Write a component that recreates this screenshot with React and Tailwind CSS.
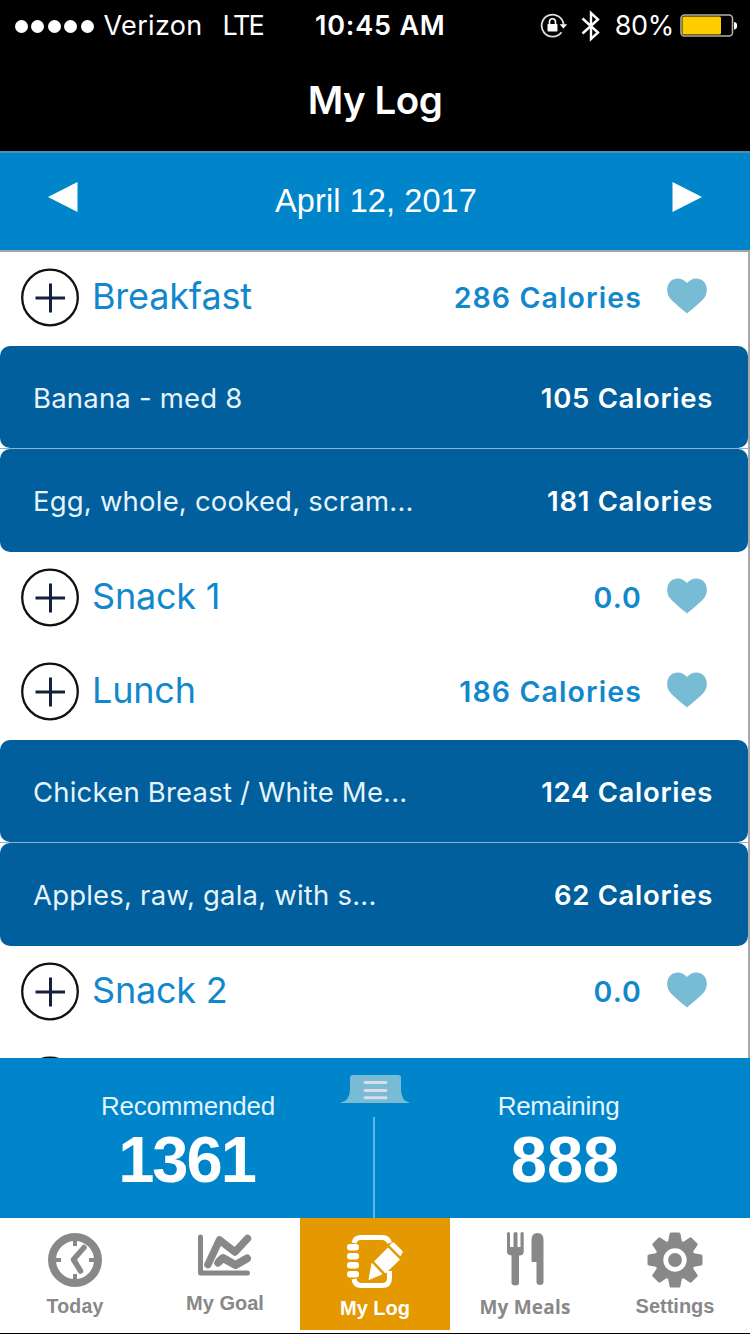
import { useState } from 'react';

const meals = [
  {
    name: 'Breakfast',
    total: '286 Calories',
    items: [
      { name: 'Banana - med 8', calories: '105 Calories' },
      { name: 'Egg, whole, cooked, scram...', calories: '181 Calories' },
    ],
  },
  { name: 'Snack 1', total: '0.0', items: [] },
  {
    name: 'Lunch',
    total: '186 Calories',
    items: [
      { name: 'Chicken Breast / White Me...', calories: '124 Calories' },
      { name: 'Apples, raw, gala, with s...', calories: '62 Calories' },
    ],
  },
  { name: 'Snack 2', total: '0.0', items: [] },
];

const RotationLockIcon = () => (
  <svg width="28" height="26" viewBox="0 0 28 26" fill="none">
    <path d="M21.5 19.2A11 11 0 1 1 23.6 11.5" stroke="#ddd" strokeWidth="1.8" />
    <path d="M19.6 11.2h7.6l-3.8 4.4z" fill="#fff" />
    <rect x="7.5" y="11" width="10" height="7.5" rx="0.8" fill="#fff" />
    <path d="M9.5 11V8.8a3 3 0 0 1 6 0V11" stroke="#fff" strokeWidth="1.6" />
  </svg>
);

const BluetoothIcon = () => (
  <svg width="20" height="32" viewBox="0 0 20 32" fill="none" stroke="#fff" strokeWidth="2.4">
    <path d="M1.5 8.5L17 22.5L10 29V3L17 9.5L1.5 23.5" />
  </svg>
);

const BatteryIcon = () => (
  <svg width="58" height="24" viewBox="0 0 58 24">
    <rect x="1" y="1" width="51.5" height="21" rx="3.5" fill="none" stroke="#b5b0a0" strokeWidth="1.6" />
    <rect x="2.4" y="2.6" width="38.6" height="17.8" rx="1.5" fill="#ffcc00" />
    <path d="M54 8c2 0 3.2 1.4 3.2 3.8S56 15.6 54 15.6z" fill="#fff" />
  </svg>
);

const StatusBar = () => (
  <div className="h-[52px] flex items-center text-white text-[27px] pl-[15px] pr-[12px]">
    <div className="w-[300px] flex items-center">
      <div className="flex gap-[3.4px] mr-[10px]">
        {[1, 2, 3, 4, 5].map((dot) => (
          <span key={dot} className="size-[13px] rounded-full bg-white" />
        ))}
      </div>
      <span className="tracking-[0.3px]">Verizon</span>
      <span className="ml-[20px] tracking-[-2px]">LTE</span>
    </div>
    <span className="font-semibold tracking-[0.8px]">10:45 AM</span>
    <div className="ml-auto flex items-center">
      <RotationLockIcon />
      <div className="ml-[13px] mr-[14px]"><BluetoothIcon /></div>
      <span className="tracking-[-0.3px]">80%</span>
      <div className="ml-[6px]"><BatteryIcon /></div>
    </div>
  </div>
);

const HeartIcon = () => (
  <svg width="41" height="36" viewBox="0 0 41 36" fill="#77bbd5">
    <path d="M20 35.5C17.5 33 6 24.5 2.500 19.5C-1 14.5-.5 7 3.500 3.200C8.500-1.300 16 -.2 20 5C24-.2 31.500-1.300 36.500 3.200C40.500 7 41 14.5 37.500 19.5C34 24.500 22.500 33 20 35.500Z" />
  </svg>
);

const AddButton = () => (
  <button>
    <svg width="58" height="59" viewBox="0 0 58 59" fill="none">
      <circle cx="29" cy="29.5" r="27.8" stroke="#111" strokeWidth="2.3" />
      <path d="M14.5 30H44M29.5 15.5V44.5" stroke="#14213a" strokeWidth="3" />
    </svg>
  </button>
);

const MealHeader = ({ meal }) => (
  <div className="h-[94px] pt-[16px] pl-[21px] pr-[40px] flex items-start">
    <AddButton />
    <span className="ml-[13px] text-[36px] leading-[56px] text-[#1288cc] tracking-[-0.2px]">{meal.name}</span>
    <span className="ml-auto mt-[2px] text-[28.5px] leading-[56px] font-semibold text-[#1288cc] tracking-[1.1px]">{meal.total}</span>
    <div className="ml-[25px] mt-[10px]"><HeartIcon /></div>
  </div>
);

const MealItem = ({ item }) => (
  <div className="h-[102px] last:h-[103px] rounded-[10px] bg-[#005f9c] text-white pl-[33px] pr-[35px] pt-[4px] last:pt-[2px] flex items-center justify-between">
    <span className="text-[27.5px] tracking-[0.2px] text-[#e6f3fb]">{item.name}</span>
    <span className="text-[27.5px] font-semibold tracking-[0.7px]">{item.calories}</span>
  </div>
);

const TodayIcon = () => (
  <svg width="54" height="56" viewBox="0 0 54 56" fill="none" stroke="#888">
    <circle cx="27" cy="28" r="23" strokeWidth="8" />
    <path d="M27 9v5M27 42v5M8 28h5M41 28h5" strokeWidth="4" />
    <path d="M36 15.5L25.500 27.500L32.500 39" strokeWidth="5.500" strokeLinecap="round" strokeLinejoin="round" />
  </svg>
);

const GoalIcon = () => (
  <svg width="54" height="44" viewBox="0 0 54 44" fill="none" stroke="#888" strokeLinecap="round" strokeLinejoin="round">
    <path d="M2.5 3V39H49.5" strokeWidth="5" />
    <path d="M20 28.500L25 24L37.500 31L49 24.500" strokeWidth="8" />
    <path d="M10 30.500L21.500 6L37 18L49.500 4.500" stroke="#fff" strokeWidth="9.500" strokeLinecap="butt" />
    <path d="M10 30.500L21.500 6L37 18L49.500 4.500" strokeWidth="7.500" />
  </svg>
);

const LogIcon = () => (
  <svg width="56" height="54" viewBox="0 0 56 54" fill="none">
    <path d="M7 8Q8 2.500 14 2.500H35Q41 2.500 42.500 8M7 44Q8 50.500 14 50.500H35Q42.500 50.500 42.500 43V36" stroke="#fff" strokeWidth="5" />
    <g fill="#fff">
      <rect x="0" y="9" width="12" height="6.5" rx="3" />
      <rect x="0" y="18" width="12" height="6.5" rx="3" />
      <rect x="0" y="27" width="12" height="6.5" rx="3" />
      <rect x="0" y="36" width="12" height="6.5" rx="3" />
      <path d="M22 44.5L25 28.5L35 39Z" stroke="#fff" strokeLinejoin="round" />
      <path d="M27 26.5L41 12.5L53 24.5L38.500 38.500Z" />
      <path d="M42.500 10.500L44.500 8Q46 6.500 47.500 8L55 15.500Q56.300 17 55 18.500L53.500 21.500Z" />
    </g>
  </svg>
);

const MealsIcon = () => (
  <svg width="37" height="54" viewBox="0 0 37 54" fill="#888">
    <path d="M1.500 0Q3 0 3 1.500V15H6.500V1.500Q6.500 0 8.500 0T10.500 1.500V15H13.500V1.500Q13.500 0 15 0T16.700 1.500V20Q16.700 23 13 23.500H12V51Q12 53.500 8.500 53.500T4.500 51V23.500Q0 23 0 20V1.500Q0 0 1.500 0Z" />
    <path d="M24.500 8Q24.500 1 30.500 1T36.500 8V50Q36.500 53 33 53T29.500 50V30H24.500Z" />
  </svg>
);

const SettingsIcon = () => (
  <svg width="56" height="56" viewBox="0 0 56 56">
    <g fill="#888">
      <circle cx="28" cy="28" r="20" />
      {[0, 45, 90, 135].map((angle) => (
        <path key={angle} d="M21 10L22.500 2Q22.700.5 24 .5H32Q33.300.5 33.500 2L35 10V46L33.500 54Q33.300 55.500 32 55.500H24Q22.700 55.500 22.500 54L21 46Z" transform={`rotate(${angle} 28 28)`} />
      ))}
    </g>
    <circle cx="28" cy="28" r="9.3" fill="#888" stroke="#fff" strokeWidth="4.8" />
  </svg>
);

const tabs = [
  { name: 'Today', icon: <TodayIcon />, iconStyle: 'h-[72px] pt-[14px]', labelStyle: 'text-[19.5px] tracking-[0.2px]' },
  { name: 'My Goal', icon: <GoalIcon />, iconStyle: 'h-[69px] pt-[16px]', labelStyle: 'text-[20px]' },
  { name: 'My Log', icon: <LogIcon />, iconStyle: 'h-[74px] pt-[17px]', labelStyle: 'text-[20px]' },
  { name: 'My Meals', icon: <MealsIcon />, iconStyle: 'h-[73px] pt-[14px]', labelStyle: "text-[19px] tracking-[0.2px] font-['Open_Sans',sans-serif]" },
  { name: 'Settings', icon: <SettingsIcon />, iconStyle: 'h-[72px] pt-[14px]', labelStyle: 'text-[20px]' },
];

const TabBar = ({ active, onChange }) => (
  <div className="h-[116px] bg-white border-b border-black flex items-start font-['Liberation_Sans',sans-serif]">
    {tabs.map((tab) => (
      <button
        key={tab.name}
        onClick={() => onChange(tab.name)}
        className={`w-[150px] h-[112px] flex flex-col items-center font-bold ${
          active === tab.name ? 'bg-[#e59900] text-white' : 'text-[#888]'
        }`}
      >
        <div className={tab.iconStyle}>{tab.icon}</div>
        <span className={`leading-[32px] whitespace-nowrap ${tab.labelStyle}`}>{tab.name}</span>
      </button>
    ))}
  </div>
);

const Summary = () => (
  <div className="relative h-[160px] bg-[#0085cb] text-white flex font-['Liberation_Sans',sans-serif]">
    <div className="w-[373px] pl-[3px] pt-[32px] flex flex-col items-center">
      <span className="text-[26px] leading-[32px] tracking-[-0.2px] text-[#e3f4fc]">Recommended</span>
      <span className="pr-[3px] text-[65px] leading-[76px] tracking-[-2px] font-bold">1361</span>
    </div>
    <div className="w-[377px] pr-[6px] pt-[32px] flex flex-col items-center">
      <span className="text-[26px] leading-[32px] tracking-[-0.3px] text-[#e3f4fc]">Remaining</span>
      <span className="pl-[13px] text-[65px] leading-[76px] font-bold">888</span>
    </div>
    <svg className="absolute left-[340px] top-[17px]" width="70" height="28" viewBox="0 0 70 28">
      <path d="M0 28Q10 26 10 14V3Q10 0 13 0H58Q61 0 61 3V14Q61 26 70 28Z" fill="#77bbd5" />
      <path d="M25 7.500H46M25 15.500H46M25 22.800H46" stroke="#dddbe3" strokeWidth="3" strokeLinecap="round" />
    </svg>
    <div className="absolute left-[373px] top-[59px] w-[2px] h-[101px] bg-[#5cb8ec]" />
  </div>
);

export default function App() {
  const [activeTab, setActiveTab] = useState('My Log');

  return (
    <div className="w-[750px] h-[1334px] flex flex-col overflow-hidden bg-white font-[Inter,sans-serif]">
      <div className="h-[151px] shrink-0 bg-black">
        <StatusBar />
        <h1 className="text-center text-white text-[38.5px] leading-[96px] font-semibold tracking-[-0.5px]">My Log</h1>
      </div>

      <div className="h-[101px] shrink-0 bg-[#0085cb] border-t-2 border-t-[#4a8fb8] border-b-2 border-b-[#a0a5aa] px-[48px] flex items-center justify-between text-white">
        <button className="-mt-[10px]">
          <svg width="30" height="30" viewBox="0 0 30 30" fill="#fff"><path d="M0 15L29.5 0V30Z" /></svg>
        </button>
        <span className="pl-[2px] font-['Liberation_Sans',sans-serif] text-[32.5px] tracking-[0.1px]">April 12, 2017</span>
        <button className="-mt-[10px]">
          <svg width="30" height="30" viewBox="0 0 30 30" fill="#fff"><path d="M30 15L.5 0V30Z" /></svg>
        </button>
      </div>

      <div className="h-[806px] shrink-0 overflow-hidden border-r-2 border-[#a9a9a9]">
        {meals.map((meal) => (
          <div key={meal.name}>
            <MealHeader meal={meal} />
            {meal.items.length > 0 && (
              <div>
                <MealItem item={meal.items[0]} />
                <div className="h-px bg-[#8fb4cf]" />
                <MealItem item={meal.items[1]} />
              </div>
            )}
          </div>
        ))}
        <div className="pt-[16px] pl-[21px]">
          <AddButton />
        </div>
      </div>

      <Summary />
      <TabBar active={activeTab} onChange={setActiveTab} />
    </div>
  );
}
